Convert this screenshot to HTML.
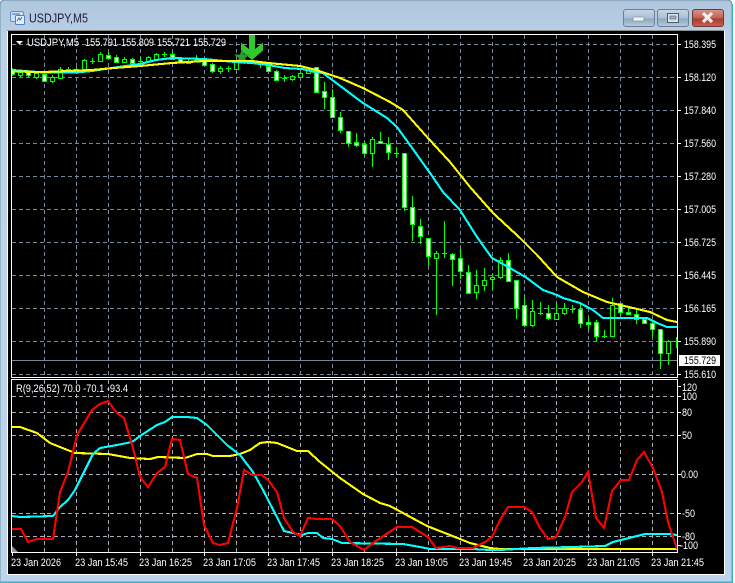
<!DOCTYPE html>
<html><head><meta charset="utf-8"><title>USDJPY,M5</title>
<style>
html,body{margin:0;padding:0;background:#fff;width:735px;height:583px;overflow:hidden}
svg{position:absolute;left:0;top:0;display:block}
text{font-family:"Liberation Sans",sans-serif;font-size:11px;fill:#fff}
</style></head><body>
<svg width="735" height="583" viewBox="0 0 735 583" xmlns="http://www.w3.org/2000/svg">
<defs>
<linearGradient id="fr" x1="0" y1="0" x2="0" y2="1"><stop offset="0" stop-color="#b0c6dc"/><stop offset=".08" stop-color="#bcd2e8"/><stop offset="1" stop-color="#bcd4ec"/></linearGradient>
<linearGradient id="bt" x1="0" y1="0" x2="0" y2="1"><stop offset="0" stop-color="#c6d6e6"/><stop offset=".5" stop-color="#a9c0d8"/><stop offset=".55" stop-color="#8fa9c4"/><stop offset="1" stop-color="#b4cbe0"/></linearGradient>
<linearGradient id="cl" x1="0" y1="0" x2="0" y2="1"><stop offset="0" stop-color="#d8938a"/><stop offset=".5" stop-color="#c4604f"/><stop offset=".55" stop-color="#a83c2e"/><stop offset="1" stop-color="#c8604e"/></linearGradient>
<clipPath id="cm"><rect x="12" y="35" width="665" height="342"/></clipPath>
<clipPath id="cs"><rect x="12" y="380" width="665" height="172"/></clipPath>
</defs>
<path d="M5 0H727Q732 0 732 5V582H0V5Q0 0 5 0Z" fill="url(#fr)" stroke="#6f93a8" stroke-width="1"/>
<path d="M0 582.5H733M732.5 4V582" stroke="#3fb4c4" stroke-width="1" fill="none"/>
<rect x="7" y="30" width="718" height="545" fill="#fff"/>
<rect x="7" y="30" width="717" height="1" fill="#8c8c8c"/>
<rect x="8" y="31" width="716" height="543" fill="#000"/>
<!-- title icon -->
<rect x="10.5" y="11.5" width="13" height="10" rx="1.5" fill="#cfe0f5" stroke="#5f8fd0"/>
<rect x="15.5" y="15.5" width="9" height="9" rx="1" fill="#e8f1fb" stroke="#4f80c8"/>
<path d="M12 14h8M17 21l2-3 1 2 2-3" stroke="#3a6cc0" fill="none"/>
<text x="29" y="22.500" style="font-size:13px;fill:#1f1a3a" textLength="59" lengthAdjust="spacingAndGlyphs">USDJPY,M5</text>
<!-- buttons -->
<rect x="623.5" y="9.5" width="31" height="17" rx="2.5" fill="url(#bt)" stroke="#6c7f94"/>
<rect x="633" y="17" width="11" height="4" rx="1" fill="#eef2f6" stroke="#6f7f90" stroke-width=".6"/>
<rect x="657.5" y="9.5" width="31" height="17" rx="2.5" fill="url(#bt)" stroke="#6c7f94"/>
<rect x="667.5" y="13.5" width="11" height="9" fill="#d8e2ec" stroke="#4f5f70"/><rect x="670" y="16" width="6" height="3" fill="#9fb2c6" stroke="#4f5f70" stroke-width=".6"/>
<rect x="692.5" y="9.5" width="31" height="17" rx="2.5" fill="url(#cl)" stroke="#6e3a38"/>
<path d="M703 13l9 9M712 13l-9 9" stroke="#f4eeee" stroke-width="3.2"/>
<!-- grid -->
<g stroke="#778899" stroke-width="1" stroke-dasharray="4 3" fill="none" shape-rendering="crispEdges">
<path clip-path="url(#cm)" d="M12 44.5H677M12 77.5H677M12 110.5H677M12 143.5H677M12 176.5H677M12 209.5H677M12 242.5H677M12 275.5H677M12 308.5H677M12 341.5H677M12 374.5H677"/>
<path clip-path="url(#cm)" d="M44.5 35V377M76.5 35V377M108.5 35V377M140.5 35V377M172.5 35V377M204.5 35V377M236.5 35V377M268.5 35V377M300.5 35V377M332.5 35V377M364.5 35V377M396.5 35V377M428.5 35V377M460.5 35V377M492.5 35V377M524.5 35V377M556.5 35V377M588.5 35V377M620.5 35V377M652.5 35V377"/>
<g stroke="#a4adb6">
<path clip-path="url(#cs)" d="M12 396.5H677M12 412.5H677M12 435.5H677M12 474.5H677M12 513.5H677M12 536.5H677"/>
<path clip-path="url(#cs)" d="M44.5 380V552M76.5 380V552M108.5 380V552M140.5 380V552M172.5 380V552M204.5 380V552M236.5 380V552M268.5 380V552M300.5 380V552M332.5 380V552M364.5 380V552M396.5 380V552M428.5 380V552M460.5 380V552M492.5 380V552M524.5 380V552M556.5 380V552M588.5 380V552M620.5 380V552M652.5 380V552"/>
</g>
</g>
<!-- bid line -->
<path d="M12 360.5H677" stroke="#778899" shape-rendering="crispEdges"/>
<!-- candles -->
<g clip-path="url(#cm)" shape-rendering="crispEdges" stroke="#00ff00" stroke-width="1">
<path fill="none" d="M12.5 68V76M20.5 71V77M28.5 71V77M36.5 71V79M44.5 73V82M52.5 75V83M60.5 67V79M68.5 67V73M76.5 67V72M84.5 59V70M92.5 58V64M100.5 52V62M108.5 52V60M116.5 55V63M124.5 57V63M132.5 58V64M140.5 58V64M148.5 56V62M156.5 53V60M164.5 52V57M172.5 52V60M180.5 57V63M188.5 59V64M196.5 55V62M204.5 60V66M212.5 63V73M220.5 66V74M228.5 66V72M236.5 60V70M244.5 58V64M252.5 60V63M260.5 63V68M268.5 64V72M276.5 70V81M284.5 75V82M292.5 75V81M300.5 72V78M308.5 69V74M316.5 67V92M324.5 82V109M332.5 89V117M340.5 112V133M348.5 131V147M356.5 133V147M364.5 142V156M372.5 137V167M380.5 132V144M388.5 137V160M396.5 148V157M404.5 153V211M412.5 196V241M420.5 219V244M428.5 238V266M436.5 251V315M444.5 221V258M452.5 253V286M460.5 249V279M468.5 265V293M476.5 270V299M484.5 268V291M492.5 274V289M500.5 257V279M508.5 253V281M516.5 280V319M524.5 298V327M532.5 300V327M540.5 302V315M548.5 305V320M556.5 303V320M564.5 303V315M572.5 305V313M580.5 304V328M588.5 317V329M596.5 320V341M604.5 330V338M612.5 298V336M620.5 303V316M628.5 308V314M636.5 309V324M644.5 317V324M652.5 322V337M660.5 329V369M668.5 340V365M676.5 337V348"/>
<path fill="none" d="M90 61.5h5M138 61.5h5M162 54.5h5M194 60.5h5M226 68.5h5M250 61.5h5M258 63.5h5M282 78.5h5M394 153.5h5M442 253.5h5M538 313.5h5M570 309.5h5M602 336.5h5M674 341.5h5"/>
<path fill="#000" d="M18.5 72.5h4v3h-4zM34.5 73.5h4v4h-4zM50.5 77.5h4v4h-4zM58.5 69.5h4v9h-4zM82.5 60.5h4v9h-4zM98.5 54.5h4v7h-4zM122.5 59.5h4v3h-4zM146.5 57.5h4v4h-4zM154.5 54.5h4v5h-4zM186.5 61.5h4v2h-4zM218.5 68.5h4v3h-4zM234.5 62.5h4v7h-4zM242.5 60.5h4v2h-4zM290.5 76.5h4v3h-4zM298.5 73.5h4v4h-4zM306.5 70.5h4v3h-4zM370.5 139.5h4v14h-4zM434.5 253.5h4v5h-4zM474.5 285.5h4v7h-4zM482.5 280.5h4v5h-4zM490.5 277.5h4v2h-4zM498.5 260.5h4v17h-4zM530.5 311.5h4v14h-4zM554.5 313.5h4v6h-4zM562.5 308.5h4v5h-4zM610.5 305.5h4v31h-4zM666.5 341.5h4v12h-4z"/>
<path fill="#fff" d="M10.5 70.5h4v4h-4zM26.5 72.5h4v3h-4zM42.5 74.5h4v7h-4zM66.5 69.5h4v3h-4zM74.5 69.5h4v3h-4zM106.5 55.5h4v3h-4zM114.5 57.5h4v5h-4zM130.5 59.5h4v4h-4zM170.5 54.5h4v5h-4zM178.5 59.5h4v3h-4zM202.5 61.5h4v4h-4zM210.5 64.5h4v7h-4zM266.5 66.5h4v5h-4zM274.5 71.5h4v9h-4zM314.5 67.5h4v25h-4zM322.5 91.5h4v6h-4zM330.5 97.5h4v20h-4zM338.5 117.5h4v13h-4zM346.5 131.5h4v12h-4zM354.5 142.5h4v3h-4zM362.5 144.5h4v9h-4zM378.5 141.5h4v2h-4zM386.5 144.5h4v8h-4zM402.5 153.5h4v54h-4zM410.5 207.5h4v17h-4zM418.5 226.5h4v10h-4zM426.5 238.5h4v18h-4zM450.5 254.5h4v5h-4zM458.5 258.5h4v13h-4zM466.5 272.5h4v21h-4zM506.5 260.5h4v21h-4zM514.5 280.5h4v28h-4zM522.5 305.5h4v20h-4zM546.5 313.5h4v5h-4zM578.5 309.5h4v14h-4zM586.5 322.5h4v2h-4zM594.5 322.5h4v14h-4zM618.5 303.5h4v9h-4zM626.5 312.5h4v2h-4zM634.5 314.5h4v5h-4zM642.5 319.5h4v4h-4zM650.5 323.5h4v6h-4zM658.5 329.5h4v24h-4z"/>
</g>
<!-- arrow & star -->
<g clip-path="url(#cm)">
<path d="M249 34h6v15l8-6.500v8l-11 9.500-11-9.500v-8l8 6.500z" fill="#2fc82f"/>
<path d="M242 49l2 5.500h6l-4.800 3.500 1.800 5.500-5-3.400-5 3.400 1.800-5.500-4.800-3.500h6z" fill="#2a9a35"/>
</g>
<!-- MA lines main -->
<g clip-path="url(#cm)" fill="none" stroke-width="2.100" shape-rendering="crispEdges" stroke-linejoin="round">
<polyline stroke="#00ffff" points="12,70 44,72.500 76,72.500 92,71 108,68.500 140,64 156,60 172,58 204,59 235,62 252,63 268,65 285,68 302,69 315,72 323,73 343,88 363,103 387,118 397,127 410,145 430,173 443,192 460,210 477,237 492,258 510,268 527,278 543,290 557,295 563,298 580,303 593,310 603,318 620,318 647,318 657,323 667,327 677,327"/>
<polyline stroke="#ffff00" points="12,71.500 44,72 92,70 108,68.500 140,66 172,63 204,61 236,61 252,61 268,63 300,66 316,70 340,78 363,88 390,102 403,110 427,137 450,162 470,187 493,213 520,238 537,255 557,277 583,292 607,302 633,308 650,312 667,320 677,322"/>
</g>
<!-- sub window lines -->
<g clip-path="url(#cs)" fill="none" stroke-width="2.100" shape-rendering="crispEdges">
<polyline stroke="#ffff00" points="12,427 20,427 37,433 50,443 75,453 108,454 130,458 150,459 158,457 185,458 197,454 207,454 213,456 230,456 240,454 250,450 260,443 268,442 277,443 297,451 308,451 320,462 340,478 363,494 380,503 390,506 427,526 460,539 470,543 490,548 500,549 677,549"/>
<polyline stroke="#00ffff" points="12,516 20,517 53,516 60,507 68,500 75,490 93,454 100,448 117,445 132,442 143,434 157,425 165,422 172,417 187,417 197,418 207,425 227,445 240,455 253,472 263,490 284,531 302,535 308,533 317,533 323,538 332,539 342,543 403,544 420,547 430,549 473,549 490,550 500,550 533,548 573,547 605,546 613,542 645,534 668,534 677,535"/>
<polyline stroke="#ff0000" points="12,529 21,529 28,542 37,539 53,539 60,492 68,472 77,435 92,410 100,404 108,401 117,413 124,418 133,448 140,477 148,487 157,473 165,467 172,439 180,440 188,474 197,478 204,525 213,543 220,545 228,543 237,508 244,470 253,475 262,475 268,480 277,492 284,518 293,532 300,536 308,518 317,519 332,519 340,526 350,542 364,550 373,543 397,527 412,527 428,537 436,548 450,546 457,548 473,548 485,542 492,537 500,520 508,507 524,507 532,512 540,528 548,539 556,537 565,517 572,492 582,482 588,472 596,518 604,528 612,491 621,480 629,480 637,460 644,452 653,468 662,492 668,522 677,549"/>
</g>
<!-- frames -->
<g fill="none" stroke="#fff" stroke-width="1" shape-rendering="crispEdges">
<rect x="11.500" y="34.500" width="666" height="343"/>
<rect x="11.500" y="379.500" width="666" height="173"/>
<path d="M678 44.500h3M678 77.500h3M678 110.500h3M678 143.500h3M678 176.500h3M678 209.500h3M678 242.500h3M678 275.500h3M678 308.500h3M678 341.500h3M678 374.500h3M678 386.500h3M678 396.500h3M678 412.500h3M678 435.500h3M678 474.500h3M678 513.500h3M678 536.500h3M678 545.500h3"/>
<path d="M12.500 553v3M76.500 553v3M140.500 553v3M204.500 553v3M268.500 553v3M332.500 553v3M396.500 553v3M460.500 553v3M524.500 553v3M588.500 553v3M652.500 553v3"/>
</g>
<path d="M16 41h7l-3.500 3.500z" fill="#fff"/>
<path d="M12 552v-6l6 6z" fill="#8a94a0"/>
<!-- chart labels -->
<g>
<text x="27" y="46" textLength="52" lengthAdjust="spacingAndGlyphs">USDJPY,M5</text>
<text x="85" y="46" textLength="33" lengthAdjust="spacingAndGlyphs">155.791</text>
<text x="121" y="46" textLength="33" lengthAdjust="spacingAndGlyphs">155.809</text>
<text x="157" y="46" textLength="33" lengthAdjust="spacingAndGlyphs">155.721</text>
<text x="193" y="46" textLength="33" lengthAdjust="spacingAndGlyphs">155.729</text>
<text x="16" y="392" textLength="112" lengthAdjust="spacingAndGlyphs">R(9,26,52) 70.0 -70.1 -93.4</text>
<!-- price axis -->
<text x="684" y="48" textLength="32" lengthAdjust="spacingAndGlyphs">158.395</text>
<text x="684" y="81" textLength="32" lengthAdjust="spacingAndGlyphs">158.120</text>
<text x="684" y="114" textLength="32" lengthAdjust="spacingAndGlyphs">157.840</text>
<text x="684" y="147" textLength="32" lengthAdjust="spacingAndGlyphs">157.560</text>
<text x="684" y="180" textLength="32" lengthAdjust="spacingAndGlyphs">157.280</text>
<text x="684" y="213" textLength="32" lengthAdjust="spacingAndGlyphs">157.005</text>
<text x="684" y="246" textLength="32" lengthAdjust="spacingAndGlyphs">156.725</text>
<text x="684" y="279" textLength="32" lengthAdjust="spacingAndGlyphs">156.445</text>
<text x="684" y="312" textLength="32" lengthAdjust="spacingAndGlyphs">156.165</text>
<text x="684" y="345" textLength="32" lengthAdjust="spacingAndGlyphs">155.890</text>
<text x="684" y="378" textLength="32" lengthAdjust="spacingAndGlyphs">155.610</text>
<rect x="679" y="355" width="41" height="11" fill="#fff"/>
<text x="684" y="364" textLength="32" lengthAdjust="spacingAndGlyphs" style="fill:#000">155.729</text>
<!-- indicator axis -->
<text x="682" y="391" textLength="15" lengthAdjust="spacingAndGlyphs">120</text>
<text x="682" y="400" textLength="15" lengthAdjust="spacingAndGlyphs">100</text>
<text x="682" y="416" textLength="10" lengthAdjust="spacingAndGlyphs">80</text>
<text x="682" y="439" textLength="10" lengthAdjust="spacingAndGlyphs">50</text>
<text x="681" y="478" textLength="17" lengthAdjust="spacingAndGlyphs">0.00</text>
<text x="682" y="517" textLength="13" lengthAdjust="spacingAndGlyphs">-50</text>
<text x="682" y="540" textLength="13" lengthAdjust="spacingAndGlyphs">-80</text>
<text x="680" y="549" textLength="18" lengthAdjust="spacingAndGlyphs">-100</text>
<!-- time axis -->
<text x="11" y="566" textLength="50" lengthAdjust="spacingAndGlyphs">23 Jan 2026</text>
<text x="75" y="566" textLength="53" lengthAdjust="spacingAndGlyphs">23 Jan 15:45</text>
<text x="139" y="566" textLength="53" lengthAdjust="spacingAndGlyphs">23 Jan 16:25</text>
<text x="203" y="566" textLength="53" lengthAdjust="spacingAndGlyphs">23 Jan 17:05</text>
<text x="267" y="566" textLength="53" lengthAdjust="spacingAndGlyphs">23 Jan 17:45</text>
<text x="331" y="566" textLength="53" lengthAdjust="spacingAndGlyphs">23 Jan 18:25</text>
<text x="395" y="566" textLength="53" lengthAdjust="spacingAndGlyphs">23 Jan 19:05</text>
<text x="459" y="566" textLength="53" lengthAdjust="spacingAndGlyphs">23 Jan 19:45</text>
<text x="523" y="566" textLength="53" lengthAdjust="spacingAndGlyphs">23 Jan 20:25</text>
<text x="587" y="566" textLength="53" lengthAdjust="spacingAndGlyphs">23 Jan 21:05</text>
<text x="651" y="566" textLength="53" lengthAdjust="spacingAndGlyphs">23 Jan 21:45</text>
</g>
</svg>
</body></html>
